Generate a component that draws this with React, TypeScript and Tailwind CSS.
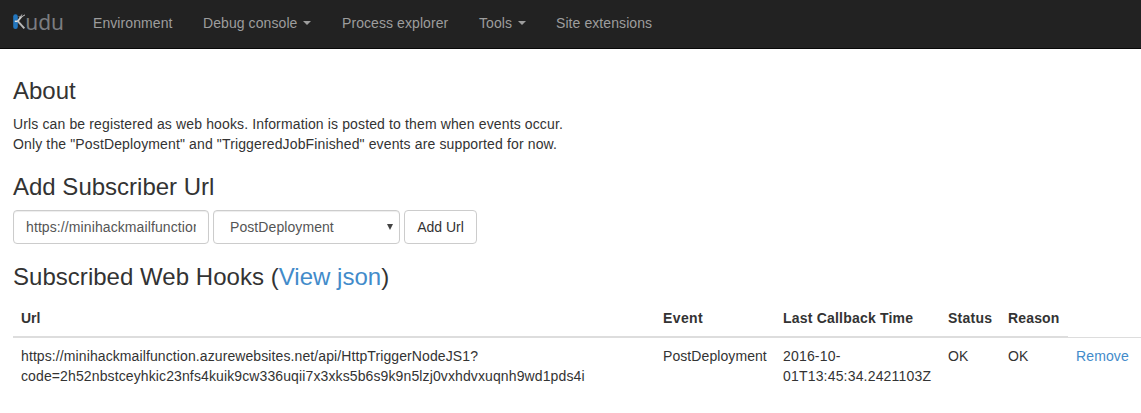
import React from "react";

function Caret() {
  return (
    <svg width="8" height="4" viewBox="0 0 8 4" className="ml-[6px] shrink-0" aria-hidden="true">
      <path d="M0 0h8L4 4z" fill="#9d9d9d" />
    </svg>
  );
}

function Logo() {
  return (
    <svg width="54" height="26" viewBox="0 0 54 26" className="block overflow-visible" role="img" aria-label="Kudu">
      <rect x="0.2" y="3.2" width="4.6" height="14.8" rx="2.2" fill="#2377bf" />
      <path d="M4.8 10.2L11.3 17.4" fill="none" stroke="#b9b9b9" strokeWidth="2" />
      <path d="M4.6 10.4L8.6 5.4" fill="none" stroke="#d0d0d0" strokeWidth="1.8" />
      <path d="M5.9 5.2l1.5 1.8M7.7 4.9l1.5-1.3M9 5.6l3-1.7" fill="none" stroke="#c4c4c4" strokeWidth="1" />
      <path d="M1.8 10.3h2.8" fill="none" stroke="#e4e4e4" strokeWidth="1.5" />
      <text x="12.2" y="18.5" textLength="38.8" lengthAdjust="spacingAndGlyphs" fontFamily="Noto Sans, sans-serif" fontSize="21" fill="#7b7d80">udu</text>
    </svg>
  );
}

const nav = [
  { label: "Environment", cls: "w-[110px]" },
  { label: "Debug console", cls: "w-[139px]", caret: true },
  { label: "Process explorer", cls: "w-[137px]" },
  { label: "Tools", cls: "w-[77px]", caret: true },
  { label: "Site extensions", cls: "w-[120px]" },
];

const columns = [
  { label: "Url", cls: "tracking-[0px]" },
  { label: "Event", cls: "tracking-[0.4px]" },
  { label: "Last Callback Time", cls: "tracking-[0.2px]" },
  { label: "Status", cls: "tracking-[0.25px]" },
  { label: "Reason", cls: "tracking-[0.15px]" },
];

const heading = "text-2xl leading-[26px] h-[26px]";

export default function App() {
  return (
    <div className="h-[413px] overflow-hidden bg-white font-['Liberation_Sans',Arial,sans-serif] text-[14px] leading-5 text-[#333]">
      <nav className="flex h-[49px] border-b border-[#080808] bg-[#222] pl-[13px] text-[#9d9d9d]">
        <a className="w-20 pt-[11px]"><Logo /></a>
        {nav.map((item) => (
          <a key={item.label} className={`flex items-center pb-0.5 whitespace-nowrap tracking-[0.08px] ${item.cls}`}>
            {item.label}
            {item.caret && <Caret />}
          </a>
        ))}
      </nav>
      <main className="pl-[13px] pt-[29px]">
        <h3 className={heading}>About</h3>
        <p className="mt-[10px] tracking-[0.135px]">
          Urls can be registered as web hooks. Information is posted to them when events occur.
          <br />
          Only the "PostDeployment" and "TriggeredJobFinished" events are supported for now.
        </p>
        <h3 className={`mt-5 ${heading}`}>Add Subscriber Url</h3>
        <form className="mt-[10px] flex h-[34px] gap-1">
          <div className="w-[196px] rounded border border-[#ccc] px-3 py-1.5 text-[#555] shadow-[inset_0_1px_1px_rgba(0,0,0,0.075)]">
            <div className="overflow-hidden whitespace-nowrap tracking-[0.1px]">https://minihackmailfunction</div>
          </div>
          <div className="flex w-[187px] items-center justify-between rounded border border-[#ccc] pl-4 pr-[6px] tracking-[0.08px] text-[#555] shadow-[inset_0_1px_1px_rgba(0,0,0,0.075)]">
            PostDeployment
            <svg width="6" height="6" viewBox="0 0 6 6"><path d="M0 0h6L3 6z" fill="#444" /></svg>
          </div>
          <button type="button" className="w-[73px] rounded border border-[#ccc] whitespace-nowrap">Add Url</button>
        </form>
        <h3 className={`mt-5 tracking-[0.03px] ${heading}`}>
          Subscribed Web Hooks (<a className="text-[#428bca]">View json</a>)
        </h3>
        <table className="mt-[10px] w-[1136px] table-fixed border-separate border-spacing-0 text-left">
          <colgroup>
            <col className="w-[642px]" />
            <col className="w-[120px]" />
            <col className="w-[165px]" />
            <col className="w-[60px]" />
            <col className="w-[68px]" />
            <col className="w-[81px]" />
          </colgroup>
          <thead>
            <tr className="h-[38px]">
              {columns.map((c) => (
                <th key={c.label} className={`border-b-2 border-[#ddd] px-2 py-2 whitespace-nowrap ${c.cls}`}>{c.label}</th>
              ))}
              <th className="border-b border-[#ddd]" />
            </tr>
          </thead>
          <tbody>
            <tr className="align-top">
              <td className="p-2">
                <span className="tracking-[0.1px]">https://minihackmailfunction.azurewebsites.net/api/HttpTriggerNodeJS1?</span>
                <br />
                <span className="tracking-[0.117px]">code=2h52nbstceyhkic23nfs4kuik9cw336uqii7x3xks5b6s9k9n5lzj0vxhdvxuqnh9wd1pds4i</span>
              </td>
              <td className="p-2 tracking-[0.08px] whitespace-nowrap">PostDeployment</td>
              <td className="p-2 tracking-[0.18px] whitespace-nowrap">2016-10-<br />01T13:45:34.2421103Z</td>
              <td className="p-2">OK</td>
              <td className="p-2">OK</td>
              <td className="p-2 tracking-[0.12px]"><a className="text-[#428bca]">Remove</a></td>
            </tr>
          </tbody>
        </table>
      </main>
    </div>
  );
}
